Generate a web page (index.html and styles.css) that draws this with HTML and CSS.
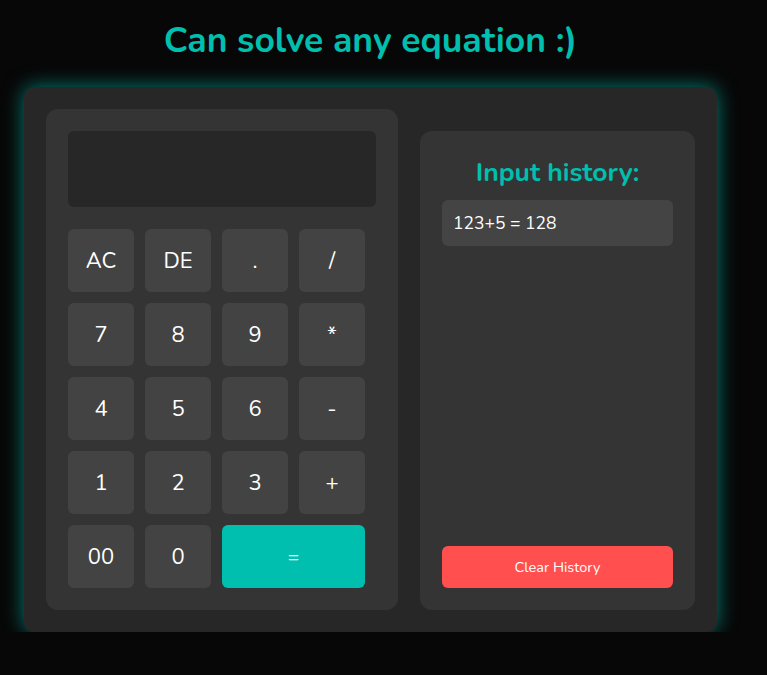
FILE: index.html
```html
<!DOCTYPE html>
<html>
<head>
<meta charset="utf-8">
<link rel="stylesheet" href="styles.css">
</head>
<body>
<div class="page">
  <h1 class="title">Can solve any equation :)</h1>
  <div class="outer">
    <div class="calc">
      <div class="display"></div>
      <div class="keys">
        <button class="key">AC</button>
        <button class="key">DE</button>
        <button class="key">.</button>
        <button class="key">/</button>
        <button class="key">7</button>
        <button class="key">8</button>
        <button class="key">9</button>
        <button class="key">*</button>
        <button class="key">4</button>
        <button class="key">5</button>
        <button class="key">6</button>
        <button class="key">-</button>
        <button class="key">1</button>
        <button class="key">2</button>
        <button class="key">3</button>
        <button class="key">+</button>
        <button class="key">00</button>
        <button class="key">0</button>
        <button class="key key-eq">=</button>
      </div>
    </div>
    <div class="history">
      <h2 class="history-title">Input history:</h2>
      <div class="history-item">123+5 = 128</div>
      <div class="spacer"></div>
      <button class="clear">Clear History</button>
    </div>
  </div>
</div>
</body>
</html>
```
FILE: styles.css
```css
html, body {
  margin: 0;
  padding: 0;
  background: #070707;
  font-family: "Nunito", "Lato", "Open Sans", sans-serif;
  color: #fff;
}
.page {
  width: 693px;
  margin-left: 24px;
  display: flex;
  flex-direction: column;
}
.title {
  margin: 0;
  height: 87px;
  box-sizing: border-box;
  padding-top: 19px;
  font-size: 35.5px;
  line-height: 44px;
  font-weight: 700;
  color: #00bfae;
  text-align: center;
}
.outer {
  background: #272727;
  border-radius: 10px;
  box-shadow: 0 0 20px rgba(0, 191, 174, 0.65);
  padding: 22px;
  height: 545px;
  box-sizing: border-box;
  display: flex;
  gap: 22px;
  align-items: stretch;
}
.calc {
  width: 352px;
  background: #343434;
  border-radius: 12px;
  padding: 22px;
  box-sizing: border-box;
  display: flex;
  flex-direction: column;
  gap: 22px;
}
.display {
  height: 76px;
  background: #272727;
  border-radius: 6px;
}
.keys {
  display: grid;
  grid-template-columns: repeat(4, 66px);
  grid-auto-rows: 63px;
  gap: 11px;
}
.key {
  border: none;
  background: #434343;
  border-radius: 6px;
  color: #fff;
  font-family: inherit;
  font-size: 22px;
  padding: 0;
}
.key-eq {
  grid-column: span 2;
  background: #00bfae;
  font-size: 19px;
}
.history {
  flex: 1;
  margin-top: 22px;
  background: #343434;
  border-radius: 12px;
  padding: 22px;
  box-sizing: border-box;
  display: flex;
  flex-direction: column;
}
.history-title {
  margin: 0;
  padding-top: 3px;
  height: 47px;
  box-sizing: border-box;
  text-align: center;
  font-size: 26.5px;
  line-height: 32px;
  font-weight: 700;
  color: #00bfae;
}
.history-item {
  height: 46px;
  background: #444;
  border-radius: 6px;
  padding: 0 11px;
  display: flex;
  align-items: center;
  font-size: 17.5px;
}
.spacer {
  flex: 1;
}
.clear {
  height: 42px;
  border: none;
  border-radius: 6px;
  background: #ff4f4f;
  color: #fff;
  font-family: inherit;
  font-size: 14.5px;
}
```
